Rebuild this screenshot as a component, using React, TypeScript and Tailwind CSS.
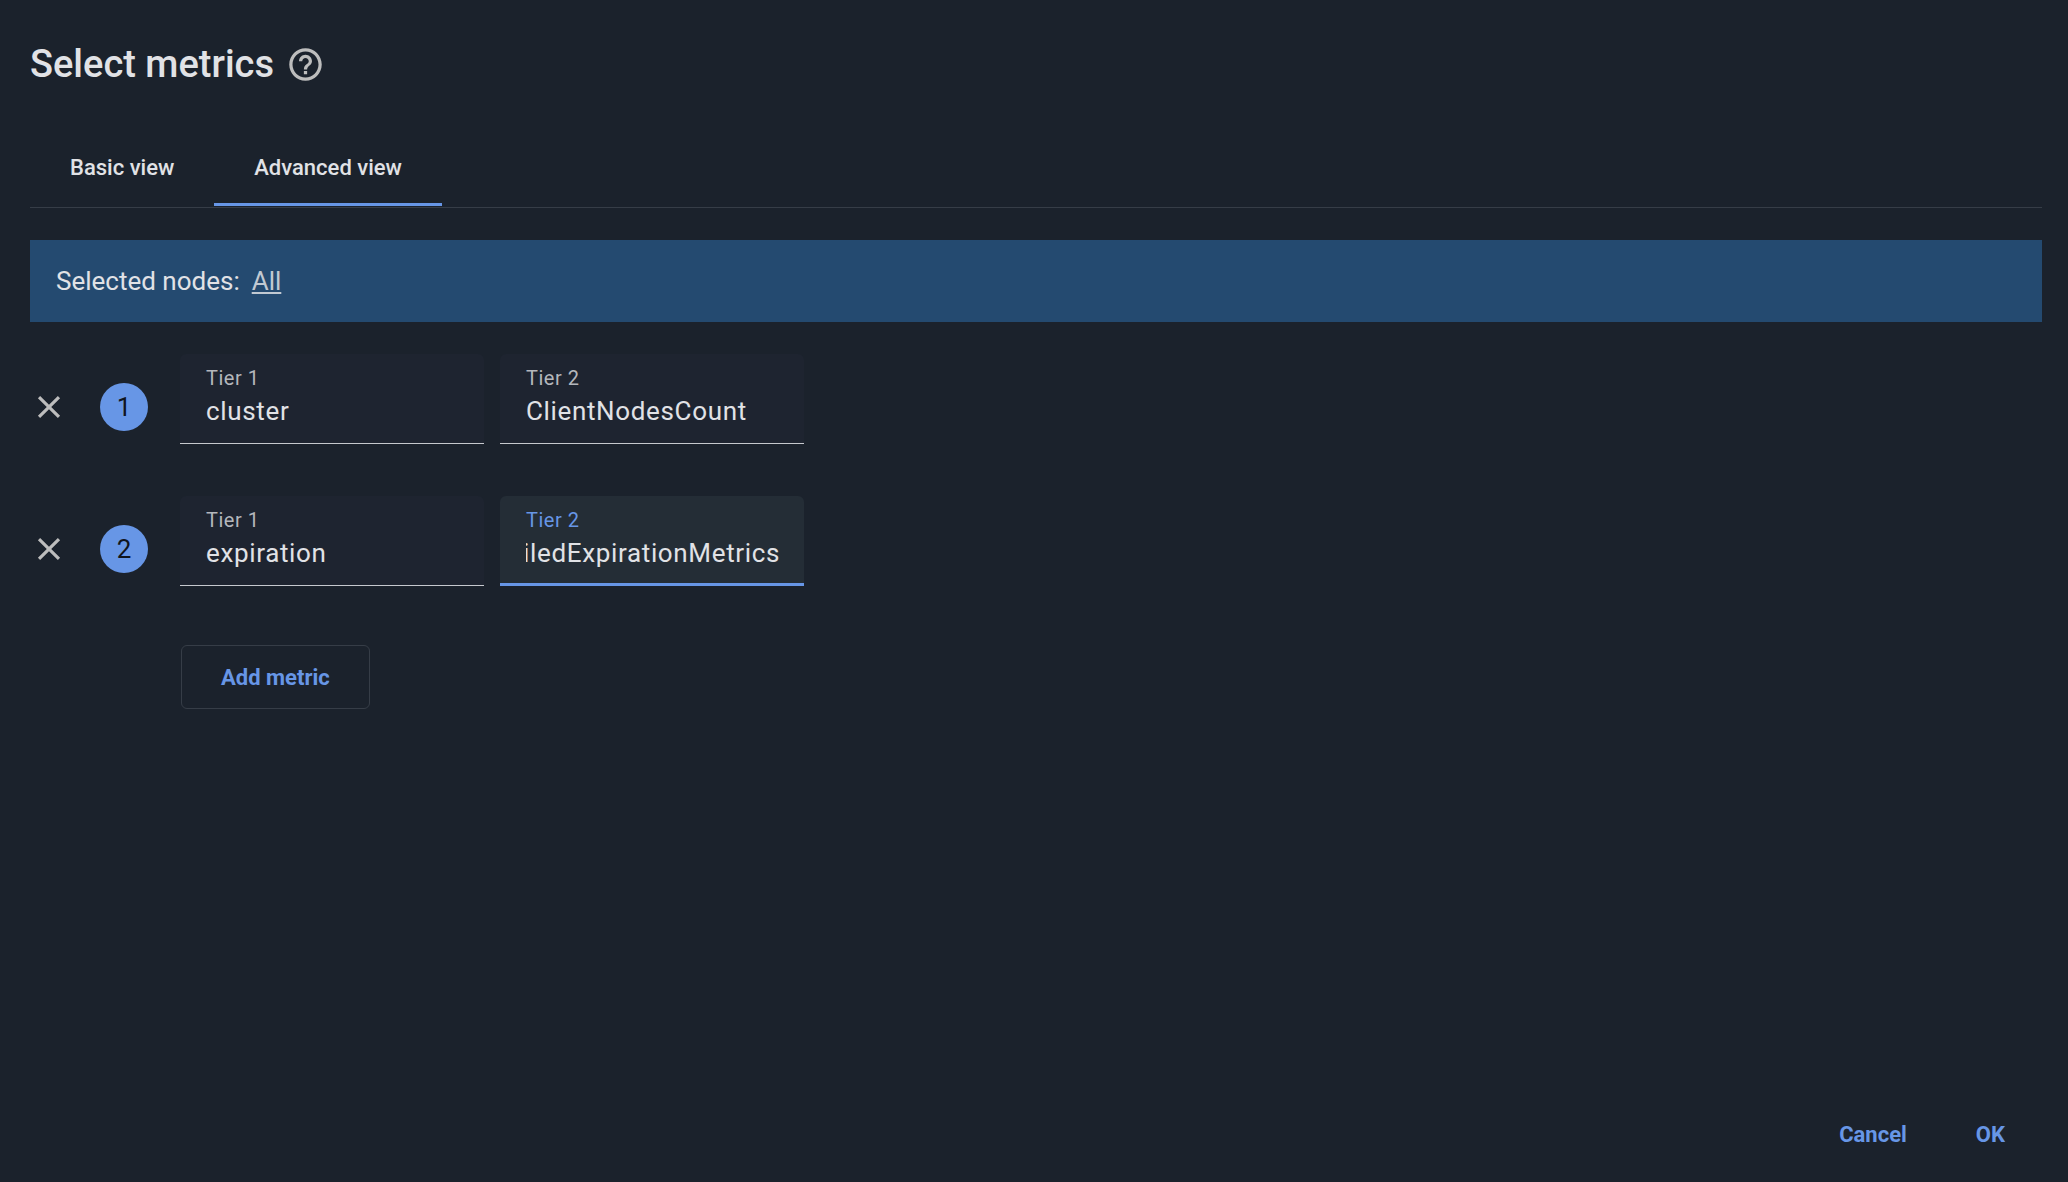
import React, { useEffect, useRef, useState } from 'react'

const metrics = [
  { id: 1, tier1: 'cluster', tier2: 'ClientNodesCount' },
  { id: 2, tier1: 'expiration', tier2: 'DetailedExpirationMetrics' },
]

const tabs = ['Basic view', 'Advanced view']

const HelpIcon = () => (
  <svg className="size-[39px]" viewBox="0 0 24 24" fill="currentColor" aria-hidden="true">
    <path d="M11 18h2v-2h-2v2zm1-16C6.48 2 2 6.48 2 12s4.48 10 10 10 10-4.48 10-10S17.52 2 12 2zm0 18c-4.41 0-8-3.59-8-8s3.59-8 8-8 8 3.59 8 8-3.59 8-8 8zm0-14c-2.21 0-4 1.79-4 4h2c0-1.1.9-2 2-2s2 .9 2 2c0 2-3 1.75-3 5h2c0-2.25 3-2.5 3-5 0-2.21-1.79-4-4-4z" />
  </svg>
)

const CloseIcon = () => (
  <svg className="size-[38px]" viewBox="0 0 24 24" fill="currentColor" aria-hidden="true">
    <path d="M19 6.41 17.59 5 12 10.59 6.41 5 5 6.41 10.59 12 5 17.59 6.41 19 12 13.41 17.59 19 19 17.59 13.41 12z" />
  </svg>
)

type FieldProps = { id: string; label: string; value: string; active?: boolean }

const Field = ({ id, label, value, active }: FieldProps) => {
  const [text, setText] = useState(value)
  const ref = useRef<HTMLInputElement>(null)

  // keep the end of a long name in view
  useEffect(() => {
    if (active && ref.current) ref.current.scrollLeft = ref.current.scrollWidth
  }, [active])

  return (
    <div
      className={
        active
          ? 'flex h-[90px] w-[304px] flex-col rounded-t-md border-b-3 border-[#6796e6] bg-[#242d36] pt-3 pr-6 pl-[26px]'
          : 'flex h-[90px] w-[304px] flex-col rounded-t-md border-b border-[#c6c9ce] bg-[#1e2430] pt-3 pr-6 pl-[26px]'
      }
    >
      <label
        htmlFor={id}
        className={active ? 'text-xl leading-6 tracking-wide text-[#6796e6]' : 'text-xl leading-6 tracking-wide text-[#b4b7bc]'}
      >
        {label}
      </label>
      <input
        ref={ref}
        id={id}
        value={text}
        onChange={(e) => setText(e.target.value)}
        className="h-[42px] w-full bg-transparent text-[26px] tracking-wide text-[#e1e2e6] outline-none"
      />
    </div>
  )
}

const App = () => {
  const [tab, setTab] = useState('Advanced view')

  return (
    <main className="flex min-h-screen flex-col bg-[#1b222c] pt-10 pr-[26px] pb-4 pl-[30px] font-[Roboto,sans-serif] text-[#e1e2e6]">
      <header className="flex h-12 items-center gap-3">
        <h1 className="text-[38px] font-medium">Select metrics</h1>
        <button type="button" aria-label="Help" className="text-[#bdbdbd]">
          <HelpIcon />
        </button>
      </header>

      <div role="tablist" className="mt-10 flex border-b border-[#363d47] pb-px">
        {tabs.map((name) => (
          <button
            key={name}
            type="button"
            role="tab"
            aria-selected={tab === name}
            onClick={() => setTab(name)}
            className={
              tab === name
                ? 'h-[78px] border-b-3 border-[#6796e6] px-10 pt-1 text-[22px] font-medium'
                : 'h-[78px] border-b-3 border-transparent px-10 pt-1 text-[22px] font-medium'
            }
          >
            {name}
          </button>
        ))}
      </div>

      <section className="mt-8 flex h-[82px] items-center gap-3 bg-[#244a70] px-[26px] text-[26px]">
        <span>Selected nodes:</span>
        <a href="#nodes" className="text-[#c1c9d2] underline">
          All
        </a>
      </section>

      <div className="mt-8 flex flex-col gap-9">
        {metrics.map((metric) => (
          <div key={metric.id} className="flex h-[106px] items-center">
            <button type="button" aria-label="Remove metric" className="text-[#bdbdbd]">
              <CloseIcon />
            </button>
            <span className="ml-8 flex size-12 items-center justify-center rounded-full bg-[#6796e6] text-[26px] text-[#10151d]">
              {metric.id}
            </span>
            <div className="ml-8 flex gap-4 self-start">
              <Field id={`tier1-${metric.id}`} label="Tier 1" value={metric.tier1} />
              <Field id={`tier2-${metric.id}`} label="Tier 2" value={metric.tier2} active={metric.id === 2} />
            </div>
          </div>
        ))}
      </div>

      <button
        type="button"
        className="mt-[43px] ml-[151px] h-16 self-start rounded-md border border-[#363d47] px-[39px] text-[22px] font-bold text-[#6796e6]"
      >
        Add metric
      </button>

      <footer className="mt-auto flex justify-end text-[22px] font-bold text-[#6796e6]">
        <button type="button" className="h-16 px-8">
          Cancel
        </button>
        <button type="button" className="h-16 px-[37px]">
          OK
        </button>
      </footer>
    </main>
  )
}

export default App
